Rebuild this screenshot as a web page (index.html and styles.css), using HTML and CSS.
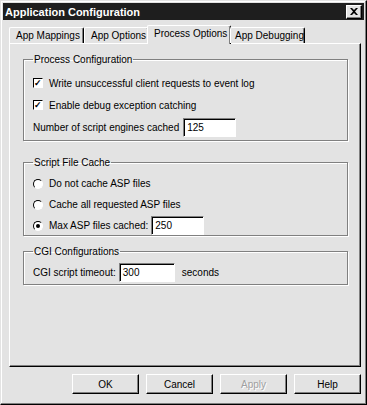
FILE: index.html
```html
<!DOCTYPE html>
<html>
<head>
<meta charset="utf-8">
<link rel="stylesheet" href="styles.css">
</head>
<body>
<div class="window">
  <div class="titlebar">
    <span class="title">Application Configuration</span>
    <span class="close"><svg width="8" height="7" viewBox="0 0 8 7"><path d="M0 0h2l2 2 2-2h2L5 3.5 8 7H6L4 5 2 7H0l3-3.5z" fill="#000"/></svg></span>
  </div>
  <div class="tabs">
    <div class="tab t1">App Mappings</div>
    <div class="tab t2">App Options</div>
    <div class="tab active">Process Options</div>
    <div class="tab t4">App Debugging</div>
  </div>
  <div class="panel">
    <fieldset class="group g1">
      <legend>Process Configuration</legend>
      <label class="row"><span class="check">&#10003;</span>Write unsuccessful client requests to event log</label>
      <label class="row"><span class="check">&#10003;</span>Enable debug exception catching</label>
      <div class="row field"><span>Number of script engines cached</span><span class="input w53">125</span></div>
    </fieldset>
    <fieldset class="group g2">
      <legend>Script File Cache</legend>
      <label class="row"><span class="radio"></span>Do not cache ASP files</label>
      <label class="row"><span class="radio"></span>Cache all requested ASP files</label>
      <label class="row"><span class="radio on"></span>Max ASP files cached:<span class="input w53 ml">250</span></label>
    </fieldset>
    <fieldset class="group g3">
      <legend>CGI Configurations</legend>
      <div class="row field2"><span>CGI script timeout:</span><span class="input w55">300</span><span class="unit">seconds</span></div>
    </fieldset>
  </div>
  <div class="buttons">
    <button class="btn">OK</button>
    <button class="btn">Cancel</button>
    <button class="btn disabled">Apply</button>
    <button class="btn">Help</button>
  </div>
</div>
</body>
</html>
```

FILE: styles.css
```css
* { box-sizing: border-box; }
html, body { margin: 0; padding: 0; background: #e3e3e3; }
body { font-family: "Liberation Sans", Arial, sans-serif; font-size: 10px; color: #000; }
.window {
  width: 367px; height: 405px;
  border-top: 1px solid #e3e3e3; border-left: 1px solid #e3e3e3;
  border-right: 1px solid #000; border-bottom: 1px solid #000;
  box-shadow: inset -1px -1px 0 #808080, inset 1px 1px 0 #fff;
  padding: 2px;
}
.titlebar {
  height: 17px; background: #1e1e1e; color: #fff;
  display: flex; align-items: center; justify-content: space-between;
  padding: 0 2px 0 2px;
}
.title { font-weight: bold; font-size: 11px; }
.close {
  width: 16px; height: 14px; background: #e3e3e3;
  border-top: 1px solid #fff; border-left: 1px solid #fff;
  border-right: 1px solid #000; border-bottom: 1px solid #000;
  box-shadow: inset -1px -1px 0 #808080;
  display: flex; align-items: center; justify-content: center;
}
.tabs { display: flex; margin: 6px 0 0 6px; height: 17px; align-items: flex-end; position: relative; z-index: 2; }
.tab {
  height: 16px; padding: 0 0 0 6px; line-height: 15px;
  border-top: 1px solid #fff; border-left: 1px solid #fff;
  border-right: 1px solid #000;
  border-radius: 2px 2px 0 0;
  box-shadow: inset -1px 0 0 #808080;
  white-space: nowrap;
}
.t1 { width: 75px; }
.t2 { width: 65px; }
.tab.active { height: 19px; margin: 0 -1px -1px -2px; width: 84px; background: #e3e3e3; padding-left: 6px; line-height: 16px; }
.t4 { width: 75px; padding-left: 4px; }
.panel {
  margin: 0 3px 0 6px; height: 324px;
  border-top: 1px solid #fff; border-left: 1px solid #fff;
  border-right: 1px solid #000; border-bottom: 1px solid #000;
  box-shadow: inset -1px -1px 0 #808080;
  padding: 10px 12px 0 13px;
  display: flex; flex-direction: column;
}
.group {
  margin: 0; padding: 0 0 0 9px;
  border: 1px solid #808080;
  box-shadow: 1px 1px 0 #fff, inset 1px 1px 0 #fff;
  min-width: 0;
}
.group legend { padding: 0 1px; margin-left: 0; line-height: 11px; }
.g1 { height: 87px; padding-top: 7px; }
.g2 { height: 79px; margin-top: 16px; padding-top: 5px; }
.g3 { height: 39px; margin-top: 10px; padding-top: 3px; }
.row { display: flex; align-items: center; height: 22px; white-space: nowrap; }
.g2 .row { height: 21px; }
.check {
  width: 10px; height: 10px; background: #fff; margin-right: 6px;
  border-top: 1px solid #000; border-left: 1px solid #000;
  border-right: 1px solid #fff; border-bottom: 1px solid #fff;
  font-size: 9px; line-height: 8px; text-align: center; font-weight: bold;
}
.radio {
  width: 10px; height: 10px; border-radius: 50%; background: #fff; margin-right: 6px;
  border: 1px solid; border-color: #000 #fff #fff #000;
  position: relative;
}
.radio.on::after {
  content: ""; position: absolute; left: 2px; top: 2px; width: 4px; height: 4px; border-radius: 50%; background: #000;
}
.field { height: 22px; }
.field .input { margin-left: 4px; }
.input {
  display: inline-block; height: 19px; background: #fff; padding: 2px 3px; line-height: 14px;
  border-top: 1px solid #808080; border-left: 1px solid #808080;
  border-right: 1px solid #fff; border-bottom: 1px solid #fff;
  box-shadow: inset 1px 1px 0 #000;
}
.w53 { width: 53px; }
.w55 { width: 56px; }
.ml { margin-left: 3px; }
.field2 { height: 24px; }
.field2 .input { margin-left: 3px; }
.unit { margin-left: 7px; }
.buttons {
  display: flex; justify-content: flex-end; gap: 7px;
  margin: 7px 3px 0 0;
}
.btn {
  width: 67px; height: 20px; font-family: inherit; font-size: 10px;
  background: #e3e3e3; padding: 0; margin: 0;
  border-top: 1px solid #fff; border-left: 1px solid #fff;
  border-right: 1px solid #000; border-bottom: 1px solid #000;
  box-shadow: inset -1px -1px 0 #808080;
  color: #000;
}
.btn.disabled { color: #a0a0a0; text-shadow: 1px 1px 0 #fff; }
```
